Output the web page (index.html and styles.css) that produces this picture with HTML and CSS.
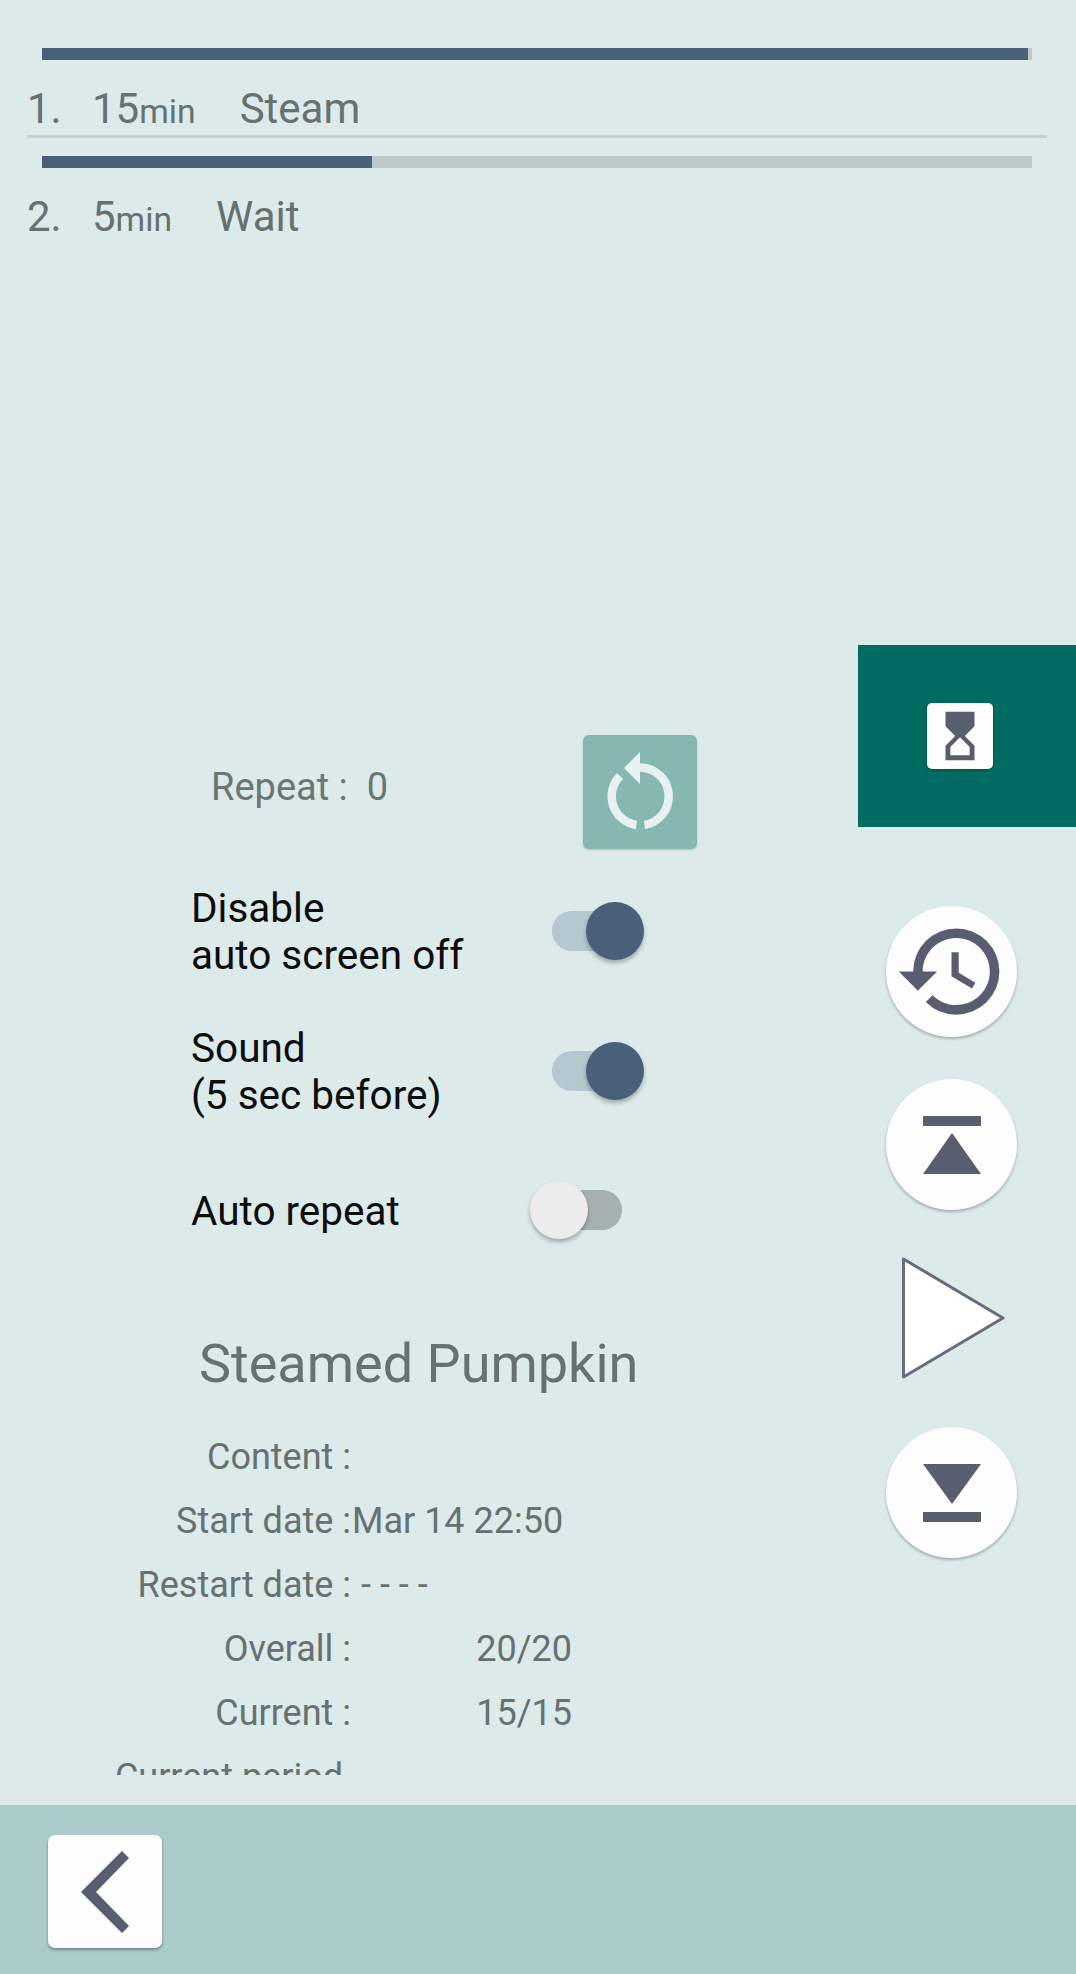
FILE: index.html
```html
<!DOCTYPE html>
<html lang="en">
<head>
    <meta charset="UTF-8">
    <meta name="viewport" content="width=device-width, initial-scale=1.0">
    <title>Steamed Pumpkin</title>
    <link rel="stylesheet" href="styles.css">
</head>
<body>
    <div class="screen">
        <div class="steps">
            <div class="step">
                <div class="progress"><div class="progress-fill progress-fill-full"></div></div>
                <div class="step-label">
                    <span class="step-num">1.</span>
                    <span class="step-time">15<small>min</small></span>
                    <span class="step-name">Steam</span>
                </div>
            </div>
            <div class="step step-last">
                <div class="progress"><div class="progress-fill progress-fill-part"></div></div>
                <div class="step-label">
                    <span class="step-num">2.</span>
                    <span class="step-time">5<small>min</small></span>
                    <span class="step-name">Wait</span>
                </div>
            </div>
        </div>

        <div class="lower">
            <div class="panel">
                <div class="repeat-row">
                    <span class="repeat-text">Repeat :&nbsp;&nbsp;0</span>
                    <button class="repeat-btn">
                        <svg width="114" height="114" viewBox="0 0 114 114">
                            <path class="repeat-arc" d="M57 32.4A29 29 0 0 1 61.5 90"/>
                            <path class="repeat-arc" d="M53.5 90A29 29 0 0 1 37 41"/>
                            <path class="repeat-head" d="M41 33L57 17V49Z"/>
                        </svg>
                    </button>
                </div>

                <div class="options">
                    <div class="option">
                        <div class="option-text">Disable<br>auto screen off</div>
                        <div class="toggle toggle-on"><div class="thumb"></div></div>
                    </div>
                    <div class="option">
                        <div class="option-text">Sound<br>(5 sec before)</div>
                        <div class="toggle toggle-on"><div class="thumb"></div></div>
                    </div>
                    <div class="option">
                        <div class="option-text">Auto repeat</div>
                        <div class="toggle toggle-off"><div class="thumb"></div></div>
                    </div>
                </div>

                <h2 class="recipe-title">Steamed Pumpkin</h2>

                <div class="info">
                    <div class="info-row"><span class="info-label">Content :</span><span class="info-value"></span></div>
                    <div class="info-row"><span class="info-label">Start date :</span><span class="info-value">Mar 14 22:50</span></div>
                    <div class="info-row"><span class="info-label">Restart date :</span><span class="info-value info-dashes">- - - -</span></div>
                    <div class="info-row"><span class="info-label">Overall :</span><span class="info-value info-count">20/20</span></div>
                    <div class="info-row"><span class="info-label">Current :</span><span class="info-value info-count">15/15</span></div>
                    <div class="info-row"><span class="info-label info-label-long">Current period</span><span class="info-value"></span></div>
                </div>
            </div>

            <div class="rail">
                <div class="timer-block">
                    <div class="timer-btn">
                        <svg width="58" height="58" viewBox="0 0 24 24">
                            <path class="icon-fill" fill-rule="evenodd" d="M6 2v6l4 4-4 4v6h12v-6l-4-4 4-4V2H6zm10 14.5V20H8v-3.5l4-4 4 4z"/>
                        </svg>
                    </div>
                </div>

                <button class="round-btn round-history">
                    <svg width="115" height="115" viewBox="0 0 24 24">
                        <path class="icon-fill" d="M13 3a9 9 0 0 0-9 9H1l3.89 3.89.07.14L9 12H6c0-3.87 3.13-7 7-7s7 3.13 7 7-3.13 7-7 7c-1.93 0-3.68-.79-4.94-2.06l-1.42 1.42A8.954 8.954 0 0 0 13 21a9 9 0 0 0 0-18zm-1 5v5l4.28 2.54.72-1.21-3.5-2.08V8H12z"/>
                    </svg>
                </button>

                <button class="round-btn round-prev">
                    <svg width="131" height="131" viewBox="0 0 131 131">
                        <path class="icon-fill" d="M37 37H95V47H37ZM66 54L95 95H37Z"/>
                    </svg>
                </button>

                <svg class="play-btn" width="107" height="126" viewBox="0 0 107 126">
                    <path d="M3.5 4L103 63L3.5 122Z"/>
                </svg>

                <button class="round-btn round-next">
                    <svg width="131" height="131" viewBox="0 0 131 131">
                        <path class="icon-fill" d="M37 37H95L66 77ZM37 85H95V95H37Z"/>
                    </svg>
                </button>
            </div>
        </div>

        <div class="bottom-bar">
            <button class="back-btn">
                <svg width="114" height="113" viewBox="0 0 114 113">
                    <path class="icon-fill" d="M33 57L74 16L81 23L48 57L81 91L74 98Z"/>
                </svg>
            </button>
        </div>
    </div>
</body>
</html>
```

FILE: styles.css
```css
* {
    box-sizing: border-box;
}
html, body {
    margin: 0;
    padding: 0;
}
body {
    font-family: Roboto, "Liberation Sans", sans-serif;
    background-color: #dceaea;
    color: #667170;
}
button {
    border: none;
    padding: 0;
    font: inherit;
}
svg {
    display: block;
    flex: none;
}
.icon-fill {
    fill: #585e70;
}
.screen {
    width: 1076px;
    height: 1974px;
    display: flex;
    flex-direction: column;
    overflow: hidden;
}

/* step list */
.steps {
    height: 645px;
    flex: none;
    padding: 48px 29px 0 27px;
}
.step {
    border-bottom: 3px solid #c3d1d1;
    height: 90px;
    margin-bottom: 18px;
}
.step-last {
    border-bottom: none;
}
.progress {
    height: 12px;
    margin: 0 15px;
    background-color: #bcc9c9;
}
.progress-fill {
    height: 100%;
    background-color: #4a5f7a;
}
.progress-fill-full {
    width: 99.6%;
}
.progress-fill-part {
    width: 33.3%;
}
.step-label {
    display: flex;
    align-items: baseline;
    font-size: 42px;
    line-height: 98px;
    height: 75px;
}
.step-num {
    width: 65px;
}
.step-time {
    margin-right: 44px;
}
.step-time small {
    font-size: 33.75px;
}

/* lower part */
.lower {
    flex: 1;
    display: flex;
    min-height: 0;
}
.panel {
    width: 858px;
    flex: none;
    padding-top: 90px;
}
.repeat-row {
    display: flex;
    height: 114px;
    padding-left: 211px;
}
.repeat-text {
    width: 372px;
    font-size: 38px;
    line-height: 114px;
    height: 114px;
    margin-top: -5px;
    color: #6a7675;
}
.repeat-btn {
    width: 114px;
    height: 114px;
    background-color: #86b7b1;
    border-radius: 6px;
    box-shadow: 0 1px 2px rgba(0,0,0,0.15);
}
.repeat-arc {
    fill: none;
    stroke: #e6f1f0;
    stroke-width: 8.5;
}
.repeat-head {
    fill: #e6f1f0;
}

.options {
    margin-top: 35px;
    padding-left: 191px;
    display: flex;
    flex-direction: column;
    gap: 45.5px;
}
.option {
    height: 94px;
    display: flex;
    align-items: center;
}
.option-text {
    width: 361px;
    padding-top: 2px;
    font-size: 40.5px;
    line-height: 47px;
    color: #0c0c0c;
}
.toggle {
    position: relative;
    width: 80px;
    height: 40px;
    border-radius: 20px;
}
.toggle-on {
    background-color: #b5c7cf;
}
.toggle-off {
    margin-left: -10px;
    background-color: #a6b0b1;
}
.thumb {
    position: absolute;
    top: -9px;
    width: 58px;
    height: 58px;
    border-radius: 50%;
    box-shadow: 0 3px 4px rgba(0,0,0,0.28);
}
.toggle-on .thumb {
    left: 34px;
    background-color: #4a5f7a;
}
.toggle-off .thumb {
    left: -12px;
    background-color: #ececec;
}

.recipe-title {
    margin: 0;
    padding-left: 199px;
    font-size: 54px;
    font-weight: normal;
    line-height: 70px;
    margin-top: 72px;
}
.info {
    height: 350px;
    overflow: hidden;
    margin-top: 26px;
}
.info-row {
    display: flex;
    height: 64px;
    line-height: 64px;
    font-size: 36px;
}
.info-label {
    width: 351px;
    flex: none;
    text-align: right;
}
.info-label-long {
    padding-right: 8px;
}
.info-value {
    padding-left: 1px;
}
.info-dashes {
    padding-left: 10px;
}
.info-count {
    width: 221px;
    text-align: right;
}

/* right rail */
.rail {
    flex: 1;
    display: flex;
    flex-direction: column;
}
.timer-block {
    height: 182px;
    flex: none;
    padding: 58px 0 0 69px;
    background-color: #006b60;
}
.timer-btn {
    width: 66px;
    height: 66px;
    display: flex;
    align-items: center;
    justify-content: center;
    background-color: #fdfdfd;
    border-radius: 5px;
    box-shadow: 0 1px 3px rgba(0,0,0,0.3);
}
.round-btn {
    width: 131px;
    height: 131px;
    flex: none;
    border-radius: 50%;
    background-color: #fdfdfd;
    box-shadow: 0 2px 3px rgba(0,0,0,0.25);
    display: flex;
    align-items: center;
    justify-content: center;
    margin-left: 28px;
}
.round-history {
    margin-top: 79px;
}
.round-prev {
    margin-top: 42px;
}
.play-btn {
    margin: 45px 0 46px 42px;
}
.play-btn path {
    fill: #fff;
    stroke: #666c7d;
    stroke-width: 3;
    stroke-linejoin: round;
}

/* bottom bar */
.bottom-bar {
    height: 169px;
    flex: none;
    padding: 30px 0 0 48px;
    background-color: #abcccb;
}
.back-btn {
    display: block;
    width: 114px;
    height: 113px;
    background-color: #fdfdfd;
    border-radius: 7px;
    box-shadow: 0 2px 3px rgba(0,0,0,0.35);
}
```
